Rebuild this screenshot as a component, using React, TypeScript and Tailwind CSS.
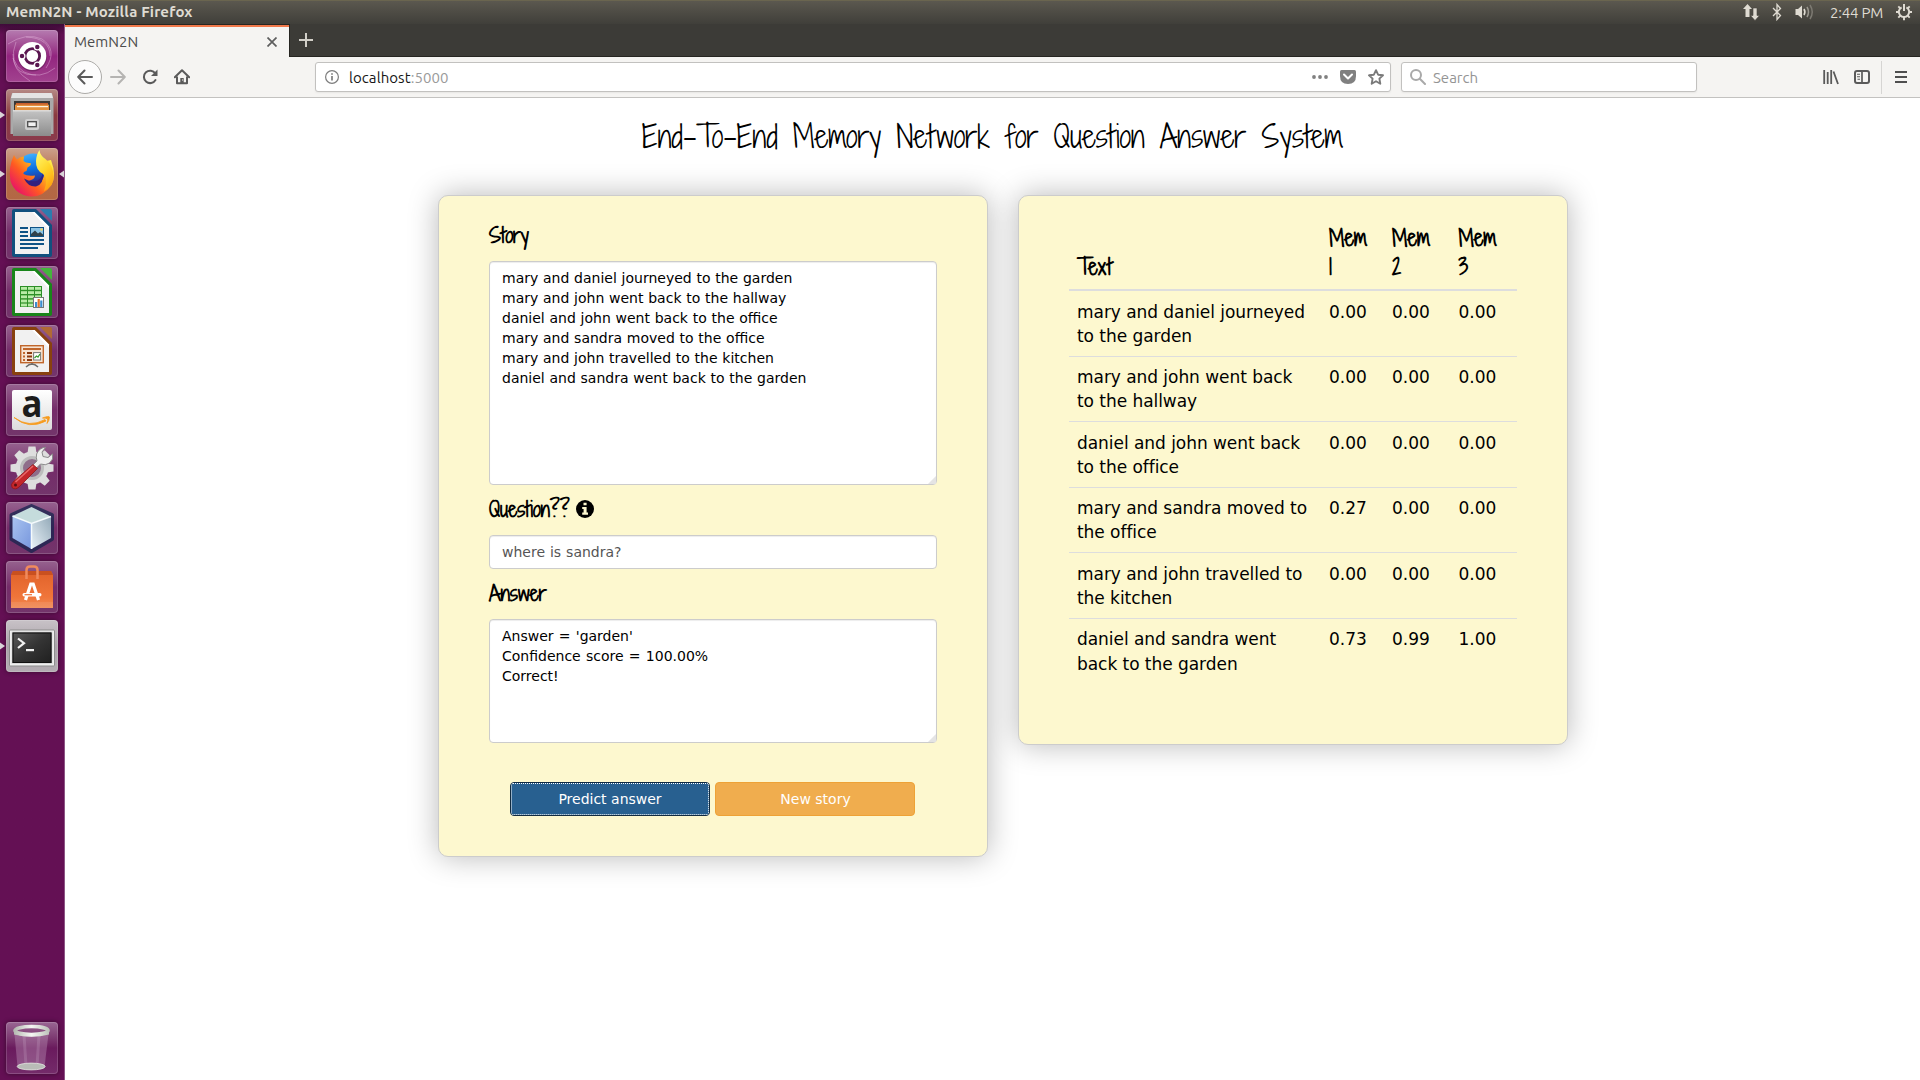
import React from "react";

type TileProps = { tint: string; children: React.ReactNode; running?: boolean; active?: boolean };

function Tile({ tint, children, running, active }: TileProps) {
  return (
    <div className="relative flex h-[52px] w-[65px] shrink-0 pl-[6px]">
      {running && (
        <svg className="absolute top-[22px] left-0" width="5" height="8" viewBox="0 0 5 8">
          <path d="M0 0.5 L5 4 L0 7.5Z" fill="#d9d4d8" />
        </svg>
      )}
      <div className={`h-[52px] w-[52px] rounded-[4px] shadow-[0_0_5px_rgba(0,0,0,0.45),inset_0_0_0_1px_rgba(255,255,255,0.16)] ${tint}`}>
        <svg className="overflow-visible" width="52" height="52" viewBox="0 0 52 52">
          {children}
        </svg>
      </div>
      {active && (
        <svg className="absolute top-[22px] right-[1px]" width="5" height="8" viewBox="0 0 5 8">
          <path d="M5 0.5 L0 4 L5 7.5Z" fill="#d9d4d8" />
        </svg>
      )}
    </div>
  );
}

const PURPLE = "bg-linear-to-b from-[#96628f] via-[#742c69] to-[#73356b]";

function OfficePage({ dark, light, children }: { dark: string; light: string; children: React.ReactNode }) {
  return (
    <>
      <path d="M8 2 H30 L46 18 V48 Q46 50 44 50 H8 Q6 50 6 48 V4 Q6 2 8 2Z" fill={dark} />
      <path d="M34 2 H44 Q46 2 46 4 V14Z" fill={light} />
      <path d="M9 5 H28.500 L43 19.500 V47 H9Z" fill="#f1f1f1" />
      <path d="M28.500 5 L43 19.500 V23 L26 5Z" fill="#ffffff" />
      {children}
    </>
  );
}

function Launcher() {
  return (
    <aside className="flex h-full w-[65px] shrink-0 flex-col gap-[7px] border-r border-[#8d5585] bg-linear-to-b from-[#3f0b39] via-[#641054] via-[1%] to-[#641054] pt-[6px] pb-[6px]">
      <Tile tint="bg-linear-to-b from-[#b57bb0] via-[#92247f] to-[#a2428f]">
        <g fill="none" stroke="#e3b5dc" strokeOpacity="0.45" strokeWidth="1">
          <path d="M2 14 Q20 2 36 9 Q52 20 40 38" />
          <path d="M20 7 Q44 8 44 26" />
          <path d="M49 38 Q34 50 18 42 Q2 32 10 12" />
          <path d="M7 28 Q10 46 30 45" />
          <path d="M24 51 Q6 40 7 24" />
        </g>
        <circle cx="26.500" cy="27" r="14.500" fill="#4d1147" opacity="0.4" />
        <circle cx="26.300" cy="26" r="14" fill="#fff" />
        <circle cx="26.300" cy="26" r="7.300" fill="none" stroke="#5a1650" strokeWidth="2.800" />
        <g stroke="#fff" strokeWidth="1.300" fill="#5a1650">
          <circle cx="16" cy="26" r="2.900" />
          <circle cx="31.300" cy="17" r="2.900" />
          <circle cx="31.300" cy="35" r="2.900" />
        </g>
      </Tile>

      <Tile running tint="bg-linear-to-b from-[#b58a86] via-[#8b3b40] to-[#8a3a4c]">
        <defs>
          <linearGradient id="cab" x1="0" y1="0" x2="0" y2="1">
            <stop offset="0" stopColor="#c4c4c4" />
            <stop offset="1" stopColor="#8c8c8c" />
          </linearGradient>
        </defs>
        <path d="M6 4 H46 L47.500 10 V45 H4.500 V10Z" fill="#a9a9a9" />
        <path d="M6.500 4 H45.500 L47 9 H5Z" fill="#e4e4e4" />
        <rect x="8" y="12" width="36" height="11" fill="#3b3735" />
        <rect x="10" y="14" width="32" height="3" fill="#c95f2d" />
        <rect x="9" y="15.700" width="34" height="6" fill="#e3913f" />
        <rect x="11" y="17" width="31" height="1.200" fill="#fff3e0" />
        <rect x="7" y="21.300" width="38" height="25.700" fill="url(#cab)" />
        <rect x="7" y="21.300" width="38" height="1" fill="#ededed" />
        <rect x="19" y="30" width="14" height="11" rx="2" fill="#cfcfcf" />
        <rect x="21.700" y="32.700" width="8.600" height="5" fill="#f1f1f1" stroke="#4c4c4c" strokeWidth="1.300" />
      </Tile>

      <Tile running active tint="bg-linear-to-b from-[#cba18c] via-[#b56a45] to-[#b36744]">
        <defs>
          <linearGradient id="fxo" x1="0.9" y1="0.1" x2="0.1" y2="0.8">
            <stop offset="0" stopColor="#fff04a" />
            <stop offset="0.35" stopColor="#ffb01c" />
            <stop offset="0.65" stopColor="#ff5a22" />
            <stop offset="1" stopColor="#ea1763" />
          </linearGradient>
          <linearGradient id="fxb" x1="0.4" y1="0" x2="0.6" y2="1">
            <stop offset="0" stopColor="#3fb0ff" />
            <stop offset="0.5" stopColor="#0a6fe0" />
            <stop offset="1" stopColor="#341d80" />
          </linearGradient>
          <linearGradient id="fxy" x1="0.3" y1="0" x2="0.7" y2="1">
            <stop offset="0" stopColor="#fff56a" />
            <stop offset="0.5" stopColor="#ffd528" />
            <stop offset="1" stopColor="#ff9d10" />
          </linearGradient>
        </defs>
        <circle cx="27" cy="21" r="15.500" fill="url(#fxb)" />
        <path d="M8 7 Q9 9.500 11 11.500 Q14 8.500 18 8.500 L17.500 13 Q20 15.500 24.500 15 Q26 17 21.500 19.500 L20.500 23 Q17 23.500 17.500 26 Q21 28.500 29 27.500 Q29 31.500 22 33 Q28 40 35 34 Q42 25 35 14 L45 12 Q51 28 45.500 37 Q37 49 25 48.500 Q9 47 4.500 33 Q2 19 8 7Z" fill="url(#fxo)" />
        <path d="M33.500 2 Q34 7.500 39.500 11 Q48 18 47.500 30 Q46 40 38 43 Q43 30 37 26 Q29.500 22 30 13 Q30.500 6 33.500 2Z" fill="url(#fxy)" />
        <path d="M18 30.500 Q23 34 31 33 Q36 30 37 25 Q38 36 30 38.500 Q22 39 18 30.500Z" fill="#33207f" />
      </Tile>

      <Tile tint={PURPLE}>
        <OfficePage dark="#11507e" light="#2c7cae">
          <g fill="#0e5386">
            <rect x="14" y="20" width="8" height="2" />
            <rect x="14" y="24" width="8" height="2" />
            <rect x="14" y="28" width="8" height="2" />
            <rect x="14" y="32" width="24" height="2" />
            <rect x="14" y="36" width="24" height="2" />
            <rect x="14" y="40" width="18" height="2" />
            <rect x="24" y="20" width="14" height="10" />
          </g>
          <rect x="25" y="21" width="12" height="8" fill="#8cc4e4" />
          <path d="M25 29 V27 L29 23.500 L32 26.500 L34 25 L37 27.500 V29Z" fill="#31424b" />
          <circle cx="35.500" cy="22.500" r="1.200" fill="#f3d45f" />
        </OfficePage>
      </Tile>

      <Tile tint={PURPLE}>
        <OfficePage dark="#19851a" light="#44b53c">
          <rect x="14" y="20" width="22" height="21" fill="#2d8f27" />
          <g fill="#b8eba6">
            {[21, 25.200, 29.400, 33.600, 37.600].map((y) => (
              <React.Fragment key={y}>
                <rect x="15" y={y} width="6" height="2.800" />
                <rect x="22" y={y} width="6" height="2.800" />
                <rect x="29" y={y} width="6" height="2.800" />
              </React.Fragment>
            ))}
          </g>
          <rect x="27.500" y="31.500" width="10" height="10" fill="#fff" stroke="#777" />
          <rect x="29" y="36" width="2.200" height="5" fill="#3c8ed0" />
          <rect x="31.600" y="33" width="2.200" height="8" fill="#e4742b" />
          <rect x="34.200" y="34.500" width="2.200" height="6.500" fill="#3c8ed0" />
        </OfficePage>
      </Tile>

      <Tile tint={PURPLE}>
        <OfficePage dark="#88410f" light="#b06a35">
          <rect x="14.700" y="20.700" width="22.600" height="17" fill="#f6e3d2" stroke="#c0662b" strokeWidth="1.400" />
          <rect x="17" y="23" width="18" height="2" fill="#c0662b" />
          <path d="M17 28h2M17 31.500h2M17 35h2" stroke="#c0662b" strokeWidth="1.800" />
          <path d="M21 28h5M21 31.500h5M21 35h5" stroke="#8c3b10" strokeWidth="2" />
          <rect x="27.600" y="27.600" width="7" height="7.400" fill="#fff" stroke="#777" strokeWidth="1" />
          <path d="M28.500 33 L30.500 31 L32 32 L34 29" stroke="#3a9b32" strokeWidth="1.300" fill="none" />
          <path d="M26 38 V40 M20 42 Q23 39 26 39 Q29 39 32 42" stroke="#6b6b6b" strokeWidth="1.500" fill="none" />
        </OfficePage>
      </Tile>

      <Tile tint={PURPLE}>
        <defs>
          <linearGradient id="amz" x1="0" y1="0" x2="0" y2="1">
            <stop offset="0" stopColor="#ffffff" />
            <stop offset="1" stopColor="#dcdcdc" />
          </linearGradient>
        </defs>
        <rect x="6" y="6" width="40" height="40" rx="2" fill="url(#amz)" />
        <text x="15.500" y="33" fontSize="37" fontWeight="700" fontFamily="Open Sans" fill="#1c1c1c" textLength="21" lengthAdjust="spacingAndGlyphs">a</text>
        <path d="M8 33.500 Q23 44.500 39 35.500 L40 37 Q23 46 8 33.500Z" fill="#f79a1c" stroke="#f79a1c" strokeWidth="0.800" />
        <path d="M36.500 34 Q43 31.500 43.500 33 Q43.500 36.500 41 39.500 Q42 36 41.500 34.800 Q40 34 36.500 34Z" fill="#f79a1c" stroke="#f79a1c" strokeWidth="0.800" />
      </Tile>

      <Tile tint={PURPLE}>
        <g fill="#dedede">
          {[0, 45, 90, 135, 180, 225, 270, 315].map((a) => (
            <path key={a} d="M21.500 10 L22.500 3.500 H29.500 L30.500 10Z" transform={`rotate(${a} 26 25)`} />
          ))}
          <circle cx="26" cy="25" r="16.500" />
        </g>
        <circle cx="26" cy="25" r="10.500" fill="#8f6d8a" stroke="#bdbdbd" strokeWidth="3" />
        <path d="M25 24 L31 18 Q28.500 10 34.500 6 Q37 4 39.500 4.500 L36 9 L37 13.500 L42 14.500 L46.500 11 Q48 16.500 43.500 20 Q39.500 23 34.500 21 L28 27.500Z" fill="#eeeeee" stroke="#8b8b8b" strokeWidth="1" />
        <path d="M27 21.500 L31.500 25.500 L13 44 Q9 47.500 6 44.500 Q4 41.500 8 38Z" fill="#c3262a" stroke="#8f1418" strokeWidth="0.800" />
        <path d="M27 23 L9.500 39" stroke="#e8696a" strokeWidth="1.600" />
        <circle cx="9.500" cy="42" r="1.500" fill="#5a0f12" />
      </Tile>

      <Tile tint={PURPLE}>
        <defs>
          <linearGradient id="nbl" x1="0" y1="0" x2="1" y2="1">
            <stop offset="0" stopColor="#a9c4f0" />
            <stop offset="1" stopColor="#7796dd" />
          </linearGradient>
          <linearGradient id="nbr" x1="0" y1="1" x2="1" y2="0">
            <stop offset="0" stopColor="#e9f2f8" />
            <stop offset="1" stopColor="#93a9b8" />
          </linearGradient>
        </defs>
        <path d="M25.500 4 L46 13 V37 L25.500 49 L5.500 37 V13Z" fill="#16244e" stroke="#16244e" strokeWidth="4" strokeLinejoin="round" opacity="0.75" />
        <path d="M25.500 5 L45 14.500 L25.500 21.500 L6.500 14Z" fill="#c5dcdc" />
        <path d="M6.500 14 L25.500 21.500 V47 L6.500 36Z" fill="url(#nbl)" />
        <path d="M45 14.500 L25.500 21.500 V47 L45 36Z" fill="url(#nbr)" />
        <path d="M6.500 14 L25.500 21.500 L45 14.500 M25.500 21.500 V47" stroke="#f4fafc" strokeWidth="1.500" fill="none" />
      </Tile>

      <Tile tint={PURPLE}>
        <defs>
          <linearGradient id="bag" x1="0" y1="0" x2="0" y2="1">
            <stop offset="0" stopColor="#e0622a" />
            <stop offset="0.7" stopColor="#f0753a" />
            <stop offset="1" stopColor="#ef8a55" />
          </linearGradient>
        </defs>
        <path d="M7 10 H45 L47 14 V47 H5 V14Z" fill="url(#bag)" />
        <path d="M7 10 H45 L47 14 H5Z" fill="#c9501f" />
        <path d="M20.500 18 V9 Q20.500 5.500 24 5.500 H28 Q31.500 5.500 31.500 9 V18" fill="none" stroke="#f08a5d" strokeWidth="2.500" />
        <path d="M19.500 39 L24.800 23 H27.200 L32.500 39" fill="none" stroke="#fff" strokeWidth="3.200" />
        <rect x="16.500" y="32" width="19" height="3.500" rx="1.700" fill="#fff" />
        <path d="M18.500 33.700 H26" stroke="#ee7137" strokeWidth="1.200" />
        <rect x="5" y="41" width="42" height="6" fill="#fff" opacity="0.08" />
      </Tile>

      <Tile running tint="bg-linear-to-b from-[#c8c2c7] via-[#aaa3a9] to-[#b3acb2]">
        <defs>
          <linearGradient id="scr" x1="0" y1="0" x2="1" y2="1">
            <stop offset="0" stopColor="#5a5a5a" />
            <stop offset="0.5" stopColor="#343434" />
            <stop offset="1" stopColor="#1f1f1f" />
          </linearGradient>
        </defs>
        <rect x="3.500" y="10" width="45" height="36" rx="1" fill="#efefef" stroke="#8d8d8d" />
        <rect x="6" y="12" width="40" height="31.500" fill="url(#scr)" stroke="#dadada" strokeWidth="1" />
        <rect x="7" y="13" width="38" height="29.500" fill="none" stroke="#111" />
        <path d="M12 18.500 L18 23.200 L12 28" fill="none" stroke="#f2f2f2" strokeWidth="2.200" />
        <rect x="20" y="29" width="8" height="2.200" fill="#f2f2f2" />
      </Tile>

      <div className="flex-1" />

      <Tile tint="bg-linear-to-b from-[#996793] via-[#6a1a5d] to-[#742b6a]">
        <defs>
          <linearGradient id="rim" x1="0" y1="0" x2="1" y2="0">
            <stop offset="0" stopColor="#b5bab2" />
            <stop offset="0.5" stopColor="#f5f7f3" />
            <stop offset="1" stopColor="#bfc3bc" />
          </linearGradient>
        </defs>
        <path d="M8.500 12 L11.500 45 Q25 50 38.500 45 L42.500 12Z" fill="#c9a5c6" opacity="0.35" />
        <path d="M33 13 L31 44 M18 13 L20 44" stroke="#d8bcd6" strokeOpacity="0.2" strokeWidth="3" />
        <ellipse cx="25.200" cy="44.500" rx="14" ry="3.400" fill="#b9bcb7" stroke="#e4e6e2" strokeWidth="0.800" />
        <ellipse cx="25.500" cy="8.500" rx="16.500" ry="4" fill="none" stroke="url(#rim)" strokeWidth="3.600" />
        <path d="M8 9 V12.500 Q25.500 17 43 12.500 V9 Q25.500 14.500 8 9Z" fill="url(#rim)" />
      </Tile>
    </aside>
  );
}

function SystemBar() {
  return (
    <header className="flex h-[24px] w-full shrink-0 items-center border-t border-[#6a654f] bg-linear-to-b from-[#5b584f] to-[#403f3a] pr-[7px] pl-[6px] font-[Ubuntu,'Noto_Sans',sans-serif] text-[#dfdbd2]">
      <h1 className="pb-[2px] text-[15px] leading-none font-bold tracking-[0.16px]">MemN2N - Mozilla Firefox</h1>
      <div className="ml-auto flex items-center pb-px">
        <svg width="18" height="18" viewBox="0 0 18 18" fill="#dfdbd2">
          <path d="M5.500 1 L10 6 H7.500 V14 H3.500 V6 H1Z" />
          <path d="M13 17.500 L8.500 12.500 H11 V5 H15 V12.500 H17.500Z" stroke="#4a4842" strokeWidth="0.600" />
        </svg>
        <svg className="ml-[12px]" width="10" height="18" viewBox="0 0 10 18" fill="none" stroke="#dfdbd2" strokeWidth="1.300">
          <path d="M1 5 L8.500 12.500 L5 16.500 V1.500 L8.500 5.500 L1 13" />
        </svg>
        <svg className="ml-[13px]" width="20" height="18" viewBox="0 0 20 18" fill="none">
          <path d="M0.500 6 H3 L7 2.500 V15.500 L3 12 H0.500Z" fill="#dfdbd2" />
          <path d="M9 6 Q10.800 9 9 12" stroke="#dfdbd2" strokeWidth="1.600" />
          <path d="M12 4 Q15 9 12 14" stroke="#9b988f" strokeWidth="1.500" />
          <path d="M15 2 Q19.500 9 15 16" stroke="#7d7a72" strokeWidth="1.500" />
        </svg>
        <span className="ml-[15px] w-[55px] text-[15px] leading-none tracking-[-0.2px] whitespace-nowrap">2:44 PM</span>
        <svg className="ml-[10px]" width="18" height="18" viewBox="0 0 18 18" fill="none" stroke="#dfdbd2">
          <path d="M6.600 4.300 A5.200 5.200 0 1 0 11.400 4.300" strokeWidth="2" />
          <path d="M9 1 V8" strokeWidth="2" />
          <path d="M9 14 V17.300 M1 9 H4 M14 9 H17 M3.300 3.300 L5.300 5.300 M14.700 3.300 L12.700 5.300 M3.300 14.700 L5.300 12.700 M14.700 14.700 L12.700 12.700" strokeWidth="1.900" />
        </svg>
      </div>
    </header>
  );
}

function TabStrip() {
  return (
    <div className="flex h-[33px] shrink-0 bg-[#3c3b37] font-[Ubuntu,'Noto_Sans',sans-serif]">
      <div className="flex w-[225px] flex-col border-t border-r border-[#262521] bg-[#f5f4f2]">
        <div className="h-[2px] bg-[#f0784a]" />
        <div className="flex flex-1 items-center pr-[12px] pl-[9px]">
          <span className="pb-[2px] text-[15px] leading-none text-[#4c4c4c]">MemN2N</span>
          <svg className="mb-px ml-auto" width="10" height="10" viewBox="0 0 10 10" stroke="#5e5e5e" strokeWidth="1.700">
            <path d="M0.500 0.500 L9.500 9.500 M9.500 0.500 L0.500 9.500" />
          </svg>
        </div>
      </div>
      <div className="flex flex-1 items-center border-b border-[#262521] pl-[9px]">
        <svg width="14" height="14" viewBox="0 0 14 14" stroke="#d2cfc8" strokeWidth="2">
          <path d="M7 0 V14 M0 7 H14" />
        </svg>
      </div>
    </div>
  );
}

function Toolbar() {
  return (
    <div className="flex h-[41px] shrink-0 items-center border-b border-[#c3c2c0] bg-[#f5f4f2] pl-[3px] font-[Ubuntu,'Noto_Sans',sans-serif] text-[15px] leading-none">
      <div className="flex h-[34px] w-[34px] items-center justify-center rounded-full border border-[#acaba8] bg-[#fcfcfc]">
        <svg width="16" height="16" viewBox="0 0 16 16" fill="none" stroke="#5a5a5a" strokeWidth="2" strokeLinecap="round" strokeLinejoin="round">
          <path d="M15 8 H1.500 M7.500 1.500 L1.200 8 L7.500 14.500" />
        </svg>
      </div>
      <svg className="ml-[8px]" width="16" height="16" viewBox="0 0 16 16" fill="none" stroke="#b5b4b2" strokeWidth="2" strokeLinecap="round" strokeLinejoin="round">
        <path d="M1 8 H14.500 M8.500 1.500 L14.800 8 L8.500 14.500" />
      </svg>
      <svg className="ml-[16px]" width="16" height="16" viewBox="0 0 16 16" fill="none" stroke="#5a5a5a" strokeWidth="2">
        <path d="M13.300 4.500 A6.200 6.200 0 1 0 13.500 11" strokeLinecap="round" />
        <path d="M15.500 0.500 V7 H9Z" fill="#5a5a5a" stroke="none" />
      </svg>
      <svg className="ml-[16px]" width="16" height="16" viewBox="0 0 16 16" fill="none" stroke="#5a5a5a" strokeWidth="2">
        <path d="M0.800 8.300 L8 1.200 L15.200 8.300" strokeLinecap="round" strokeLinejoin="round" />
        <path d="M3 7.500 V14.200 H13 V7.500" strokeLinejoin="round" />
        <path d="M6.300 14 V9 H9.700 V14Z" fill="#5a5a5a" stroke="none" />
        <rect x="8" y="10.500" width="1" height="1" fill="#f5f4f2" stroke="none" />
      </svg>
      <div className="ml-[125px] flex h-[30px] w-[1076px] items-center rounded-[3px] border border-[#c2c1bf] bg-white pr-[6px] pl-[9px] shadow-[0_1px_2px_rgba(0,0,0,0.06)]">
        <svg width="14" height="14" viewBox="0 0 14 14" fill="none" stroke="#7d7d7d">
          <circle cx="7" cy="7" r="6.400" strokeWidth="1.200" />
          <path d="M7 6 V10.500 M7 3.300 V4.800" strokeWidth="1.700" />
        </svg>
        <span className="ml-[10px] tracking-[0.07px] text-[#161616]">
          localhost<span className="text-[#9a9a9a]">:5000</span>
        </span>
        <svg className="ml-auto" width="16" height="4" viewBox="0 0 16 4" fill="#808080">
          <circle cx="2" cy="2" r="1.900" />
          <circle cx="8" cy="2" r="1.900" />
          <circle cx="14" cy="2" r="1.900" />
        </svg>
        <svg className="ml-[12px]" width="16" height="16" viewBox="0 0 16 16">
          <path d="M1.500 1 H14.500 Q16 1 16 2.500 V7 Q16 15 8 15 Q0 15 0 7 V2.500 Q0 1 1.500 1Z" fill="#808080" />
          <path d="M4 5.500 L8 9.500 L12 5.500" fill="none" stroke="#fff" strokeWidth="2" strokeLinecap="round" strokeLinejoin="round" />
        </svg>
        <svg className="ml-[12px]" width="16" height="16" viewBox="0 0 16 16" fill="none" stroke="#7a7a7a" strokeWidth="1.900" strokeLinejoin="round">
          <path d="M8 1.200 L10.100 5.700 L15 6.300 L11.400 9.600 L12.300 14.700 L8 12.200 L3.700 14.700 L4.600 9.600 L1 6.300 L5.900 5.700Z" />
        </svg>
      </div>
      <div className="ml-[10px] flex h-[30px] w-[296px] items-center rounded-[3px] border border-[#c2c1bf] bg-white pl-[8px] shadow-[0_1px_2px_rgba(0,0,0,0.06)]">
        <svg width="16" height="16" viewBox="0 0 16 16" fill="none" stroke="#a9a9a9" strokeWidth="2">
          <circle cx="6" cy="6" r="5" />
          <path d="M9.800 9.800 L15 15" strokeLinecap="round" />
        </svg>
        <span className="ml-[7px] text-[#949494]">Search</span>
      </div>
      <div className="ml-auto flex items-center">
        <svg width="16" height="16" viewBox="0 0 16 16" fill="none" stroke="#5a5a5a" strokeWidth="1.800">
          <path d="M1.200 1 V15 M4.700 3 V15 M8.200 1 V15 M10.500 2.500 L15 15" />
        </svg>
        <svg className="ml-[15px]" width="16" height="16" viewBox="0 0 16 16" fill="none" stroke="#5a5a5a" strokeWidth="2">
          <rect x="1" y="2" width="14" height="12" rx="2" />
          <path d="M8 2 V14" strokeWidth="1.700" />
          <path d="M3 5.200 H6 M3 7.700 H6 M3.500 10.200 H6" strokeWidth="1.100" />
        </svg>
        <div className="ml-[11px] h-[33px] w-px bg-[#d6d5d3]" />
        <svg className="mr-[13px] ml-[13px]" width="12" height="14" viewBox="0 0 12 14" stroke="#4f4f4f" strokeWidth="2">
          <path d="M0 2 H12 M0 7 H12 M0 12 H12" />
        </svg>
      </div>
    </div>
  );
}

function Grip() {
  return (
    <svg className="pointer-events-none absolute right-[1px] bottom-[1px]" width="8" height="8" viewBox="0 0 8 8">
      <path d="M8 0 V8 H0Z" fill="#e4e4e4" />
    </svg>
  );
}

const HAND = "font-['Shadows_Into_Light_Two','Shadows_Into_Light',cursive]";
const FIELD = "block w-full resize-none rounded-[4px] border border-[#cccccc] bg-white px-[12px] py-[6px] text-[14px] leading-[20px] shadow-[inset_0_1px_1px_rgba(0,0,0,0.075)] outline-none";
const CARD = "w-[550px] rounded-[10px] border border-[#cccccc] bg-[#fdf8cf] px-[50px] shadow-[0_0_30px_rgba(0,0,0,0.28)]";

const STORY = [
  "mary and daniel journeyed to the garden",
  "mary and john went back to the hallway",
  "daniel and john went back to the office",
  "mary and sandra moved to the office",
  "mary and john travelled to the kitchen",
  "daniel and sandra went back to the garden",
];

const WEIGHTS = [
  ["0.00", "0.00", "0.00"],
  ["0.00", "0.00", "0.00"],
  ["0.00", "0.00", "0.00"],
  ["0.27", "0.00", "0.00"],
  ["0.00", "0.00", "0.00"],
  ["0.73", "0.99", "1.00"],
];

function QuestionCard() {
  return (
    <section className={`${CARD} h-[662px] pt-[25px]`}>
      <label className={`${HAND} block h-[40px] text-[20px] leading-[30px] font-bold`}>Story</label>
      <div className="relative h-[224px]">
        <textarea readOnly spellCheck={false} className={`${FIELD} h-full [font-variant-ligatures:common-ligatures] [word-spacing:0.3px]`} value={STORY.join("\n")} />
        <Grip />
      </div>
      <label className={`${HAND} flex h-[50px] pt-[10px] text-[20px] leading-[30px] font-bold`}>
        Question??
        <svg className="mt-[5px] ml-[6px]" width="18" height="18" viewBox="0 0 18 18">
          <circle cx="9" cy="9" r="9" fill="#000" />
          <path d="M7.500 2.700 H10.600 V5.300 H7.500Z M6.200 7 H10.600 V12.600 H12 V14.700 H6.200 V12.600 H7.600 V9.100 H6.200Z" fill="#fdf8cf" />
        </svg>
      </label>
      <input readOnly className={`${FIELD} h-[34px] [word-spacing:0.5px] text-[#555555]`} value="where is sandra?" />
      <label className={`${HAND} block h-[50px] pt-[10px] text-[20px] leading-[30px] font-bold`}>Answer</label>
      <div className="relative h-[124px]">
        <textarea readOnly spellCheck={false} className={`${FIELD} h-full [word-spacing:0.8px]`} value={"Answer = 'garden'\nConfidence score = 100.00%\nCorrect!"} />
        <Grip />
      </div>
      <div className="mt-[39px] flex gap-[5px] pl-[21px] text-[14px] leading-[20px] text-white">
        <button className="h-[34px] w-[200px] rounded-[4px] border border-[#122b40] bg-[#286090] p-0">
          <span className="flex h-full items-center justify-center rounded-[2px] border border-dotted border-white">Predict answer</span>
        </button>
        <button className="h-[34px] w-[200px] rounded-[4px] border border-[#eea236] bg-[#f0ad4e] pl-px">New story</button>
      </div>
    </section>
  );
}

function MemoryCard() {
  return (
    <section className={`${CARD} h-[550px] pt-[20px]`}>
      <table className="w-full table-fixed border-collapse text-left text-[17px] leading-[24.28px]">
        <colgroup>
          <col className="w-[252px]" />
          <col className="w-[63px]" />
          <col className="w-[66.500px]" />
          <col />
        </colgroup>
        <thead className={`${HAND} text-[21px] leading-[28.500px] font-bold`}>
          <tr className="border-b-2 border-[#dddddd]">
            <th className="p-[8px] align-bottom">Text</th>
            <th className="p-[8px]">Mem<br />1</th>
            <th className="p-[8px]">Mem<br />2</th>
            <th className="p-[8px]">Mem<br />3</th>
          </tr>
        </thead>
        <tbody>
          {STORY.map((line, i) => (
            <tr key={line} className="border-t border-[#dddddd] align-top">
              <td className="px-[8px] pt-[8.500px] pb-[7.500px] tracking-[-0.05px]">{line}</td>
              {WEIGHTS[i].map((w, j) => (
                <td key={j} className="px-[8px] pt-[8.500px] pb-[7.500px]">{w}</td>
              ))}
            </tr>
          ))}
        </tbody>
      </table>
    </section>
  );
}

export default function App() {
  return (
    <div className="flex h-[1080px] w-[1920px] flex-col overflow-hidden bg-white">
      <SystemBar />
      <div className="flex min-h-0 flex-1">
        <Launcher />
        <div className="flex flex-1 flex-col">
          <TabStrip />
          <Toolbar />
          <main className="flex-1 bg-white font-['DejaVu_Sans',sans-serif] text-black">
            <h2 className={`${HAND} h-[97px] pt-[18px] text-center text-[30px] leading-[40px]`}>
              End-To-End Memory Network for Question Answer System
            </h2>
            <div className="flex items-start gap-[30px] pl-[373px]">
              <QuestionCard />
              <MemoryCard />
            </div>
          </main>
        </div>
      </div>
    </div>
  );
}
